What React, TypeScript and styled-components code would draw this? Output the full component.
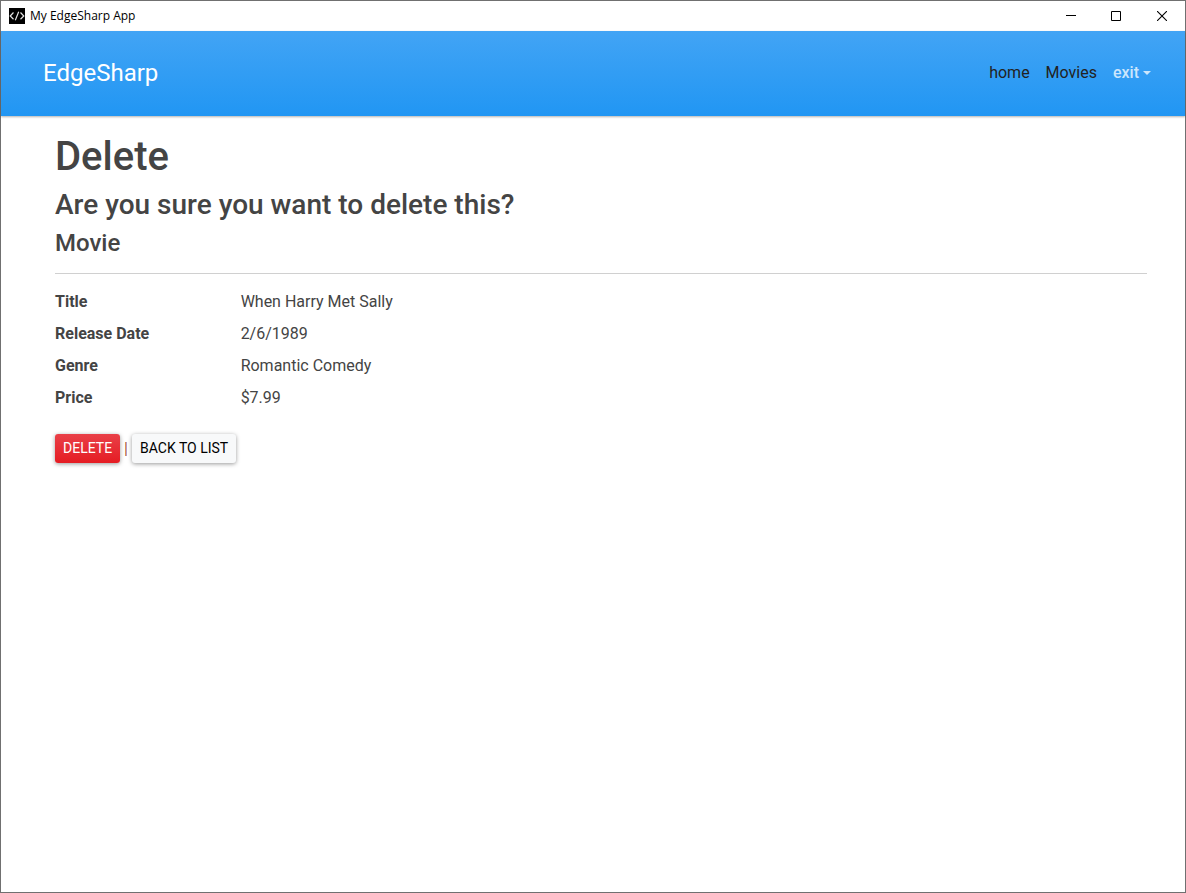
import React from "react";
import styled, { createGlobalStyle } from "styled-components";

const GlobalStyle = createGlobalStyle`
  *, *::before, *::after { box-sizing: border-box; }
  body {
    margin: 0;
    background: #fff;
    color: #444;
    font: 400 16px/24px Roboto, "Liberation Sans", sans-serif;
  }
`;

const AppWindow = styled.div`
  display: flex;
  flex-direction: column;
  min-height: 100vh;
  border: 1px solid #707070;
`;

const TitleBar = styled.div`
  display: flex;
  align-items: center;
  height: 30px;
  padding-left: 8px;
  color: #000;
  font: 12px/16px "Open Sans", "Noto Sans", sans-serif;
`;

const AppTitle = styled.span`
  flex: 1;
  margin-left: 5px;
`;

const WindowButton = styled.button`
  display: flex;
  align-items: center;
  justify-content: center;
  width: 46px;
  height: 30px;
  padding: 0;
  border: 0;
  background: none;
  color: #000;
`;

const Header = styled.header`
  display: flex;
  align-items: center;
  justify-content: space-between;
  height: 85px;
  padding: 0 34px 2px 42px;
  background: linear-gradient(180deg, #42a4f5, #2196f3);
  box-shadow: 0 1px 2px rgba(0, 0, 0, 0.3);
`;

const Brand = styled.a`
  color: #fff;
  font-size: 24px;
  line-height: 36px;
  text-decoration: none;
`;

const Nav = styled.nav`
  display: flex;
  gap: 16px;
`;

const NavLink = styled.a`
  color: #222;
  text-decoration: none;
`;

const NavMenuButton = styled.button`
  display: flex;
  align-items: center;
  gap: 4px;
  padding: 0;
  border: 0;
  background: none;
  color: rgba(255, 255, 255, 0.75);
  font: inherit;
  font-weight: 500;

  &::after {
    content: "";
    border: 4px solid transparent;
    border-top-color: currentColor;
    border-bottom: 0;
  }
`;

const Main = styled.main`
  padding: 16px 38px 16px 54px;
`;

const Heading = styled.h1<{ $size: number; $line: number }>`
  margin: 0 0 8px;
  font-size: ${(p) => p.$size}px;
  line-height: ${(p) => p.$line}px;
  font-weight: 500;
`;

const Divider = styled.hr`
  margin: 16px 0;
  border: 0;
  border-top: 1px solid #d0d0d0;
`;

const Details = styled.dl`
  display: grid;
  grid-template-columns: 17% 1fr;
  row-gap: 8px;
  margin: 0 0 24px;
`;

const Term = styled.dt`
  font-weight: 700;
`;

const Value = styled.dd`
  margin: 0;
`;

const Actions = styled.form`
  display: flex;
  align-items: center;
  gap: 4px;
  color: #a3543c;
`;

const actionStyle = `
  height: 29px;
  padding: 4px 8px;
  border: 0;
  border-radius: 3px;
  box-shadow: 0 1px 4px rgba(0, 0, 0, 0.4);
  font: 400 14px/21px Roboto, "Liberation Sans", sans-serif;
  text-transform: uppercase;
  text-decoration: none;
`;

const DeleteButton = styled.button`
  ${actionStyle}
  background: linear-gradient(180deg, #e94048, #e51c23);
  color: #fff;
`;

const BackLink = styled.a`
  ${actionStyle}
  background: #f8f9fa;
  color: #000;
`;

const movie = [
  ["Title", "When Harry Met Sally"],
  ["Release Date", "2/6/1989"],
  ["Genre", "Romantic Comedy"],
  ["Price", "$7.99"],
];

export default function App() {
  return (
    <>
      <GlobalStyle />
      <AppWindow>
        <TitleBar>
          <svg width="16" height="16" viewBox="0 0 16 16" aria-hidden="true">
            <path d="M0 0H16V16H0Z" fill="#000" />
            <path
              d="M4.5 4.5L1.2 8L4.5 11.2M11.5 4.5L14.8 8L11.5 11.2M9.7 3.8L6.3 12.2"
              fill="none"
              stroke="#e4e4e4"
              strokeWidth="1.2"
            />
          </svg>
          <AppTitle>My EdgeSharp App</AppTitle>
          <WindowButton aria-label="Minimize">
            <svg width="12" height="10" shapeRendering="crispEdges">
              <path d="M2 4.5H12" stroke="currentColor" />
            </svg>
          </WindowButton>
          <WindowButton aria-label="Maximize">
            <svg width="10" height="10">
              <path d="M.5 .5H9.5V9.5H.5Z" fill="none" stroke="currentColor" />
            </svg>
          </WindowButton>
          <WindowButton aria-label="Close">
            <svg width="10" height="10">
              <path d="M0 0L10 10M10 0L0 10" fill="none" stroke="currentColor" strokeWidth="1.1" />
            </svg>
          </WindowButton>
        </TitleBar>
        <Header>
          <Brand href="#">EdgeSharp</Brand>
          <Nav>
            <NavLink href="#home">home</NavLink>
            <NavLink href="#movies">Movies</NavLink>
            <NavMenuButton type="button">exit</NavMenuButton>
          </Nav>
        </Header>
        <Main>
          <Heading $size={40} $line={49}>Delete</Heading>
          <Heading as="h3" $size={28} $line={32}>Are you sure you want to delete this?</Heading>
          <Heading as="h4" $size={24} $line={28}>Movie</Heading>
          <Divider />
          <Details>
            {movie.map(([term, value]) => (
              <React.Fragment key={term}>
                <Term>{term}</Term>
                <Value>{value}</Value>
              </React.Fragment>
            ))}
          </Details>
          <Actions onSubmit={(e) => e.preventDefault()}>
            <DeleteButton type="submit">Delete</DeleteButton>
            |
            <BackLink href="#movies">Back to List</BackLink>
          </Actions>
        </Main>
      </AppWindow>
    </>
  );
}
